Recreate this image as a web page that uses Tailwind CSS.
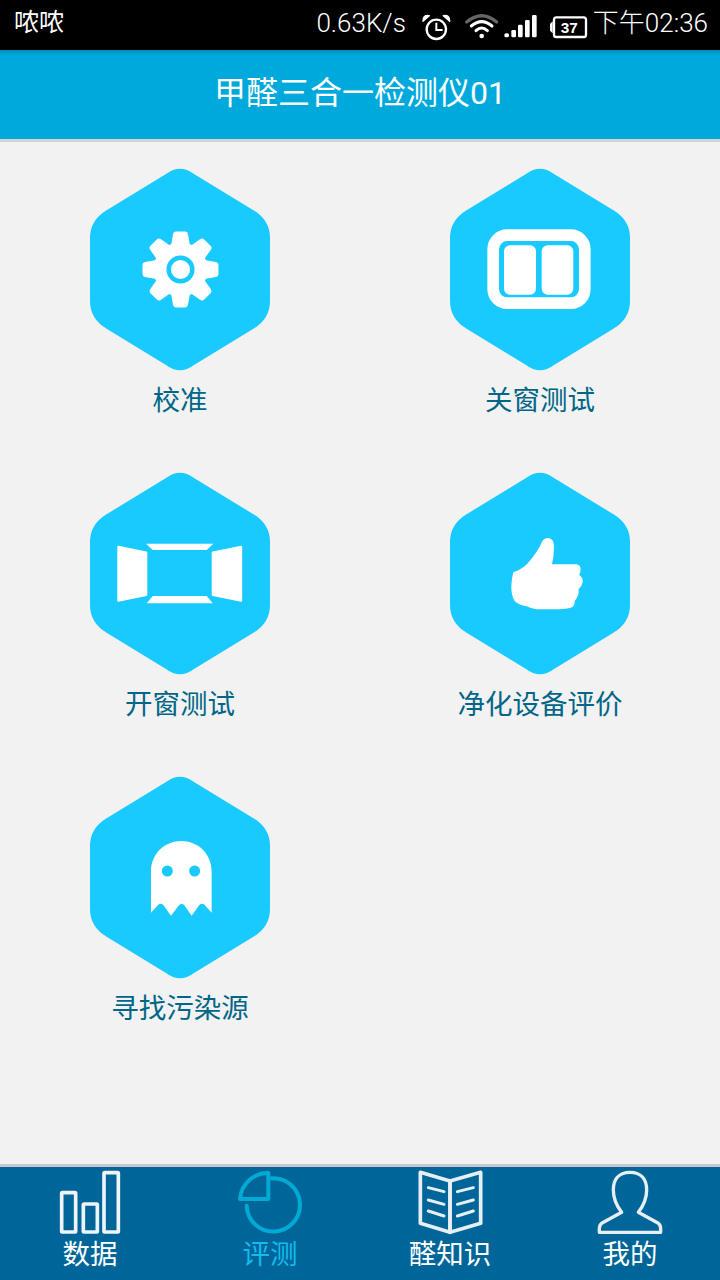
<!DOCTYPE html>
<html lang="zh">
<head>
<meta charset="utf-8">
<script src="https://cdn.jsdelivr.net/npm/@tailwindcss/browser@4"></script>
</head>
<body class="m-0">
<div class="w-[720px] h-[1280px] flex flex-col overflow-hidden bg-[#f2f2f2] font-['Roboto','Noto_Sans_CJK_SC',sans-serif] font-light">
  <div class="h-[50px] shrink-0 bg-black text-white text-[26px] flex items-center justify-between pl-[14px] pr-[12px]">
    <span class="-mt-[5px] text-[25px] font-normal">哝哝</span>
    <div class="flex items-center">
      <span class="-mt-[3px] mr-[4px]">0.63K/s</span>
      <svg class="w-[178px] h-[50px]" viewBox="0 0 534 150" fill="none">
        <circle cx="79" cy="88" r="29" stroke="#fff" stroke-width="7"/>
        <path d="M79 68V90H98" stroke="#fff" stroke-width="6"/>
        <path d="M39 64Q38 44 58 47ZM119 64Q120 44 100 47Z" fill="#fff" stroke="#fff" stroke-width="4" stroke-linejoin="round"/>
        <path d="M170 66Q215 28 260 66" stroke="#666" stroke-width="10" stroke-linecap="round"/>
        <path d="M184 78Q215 52 246 78" stroke="#fff" stroke-width="9" stroke-linecap="round"/>
        <path d="M198 92Q215 76 232 92" stroke="#fff" stroke-width="9" stroke-linecap="round"/>
        <circle cx="215" cy="108" r="7" fill="#fff"/>
        <rect x="283" y="100" width="14" height="12" rx="5" fill="#fff"/>
        <rect x="304" y="90" width="14" height="22" rx="4" fill="#fff"/>
        <rect x="324" y="74" width="14" height="38" rx="4" fill="#fff"/>
        <rect x="345" y="60" width="14" height="52" rx="4" fill="#fff"/>
        <rect x="366" y="45" width="14" height="67" rx="4" fill="#fff"/>
        <rect x="432" y="52" width="96" height="59" rx="7" stroke="#fff" stroke-width="7"/>
        <path d="M428 64L420 72V92L428 100Z" fill="#fff"/>
        <text x="478" y="98" text-anchor="middle" fill="#fff" font-family="Liberation Sans" font-weight="700" font-size="46">37</text>
      </svg>
      <span class="-mt-[3px] ml-[5px]">下午02:36</span>
    </div>
  </div>

  <div class="h-[89px] shrink-0 bg-[#00a9dc] shadow-[inset_0_5px_4px_-3px_rgba(0,0,0,0.2)] flex items-center justify-center text-white text-[32px] font-normal pb-[3px]">甲醛三合一检测仪01</div>
  <div class="h-[3px] shrink-0 bg-[#d2d2d2]"></div>

  <main class="flex-1 grid grid-cols-2 content-start pt-[26px] text-[#006688] text-[27.5px] font-normal">
    <div class="h-[304px] flex flex-col items-center">
      <svg class="w-[180px] h-[203px]" viewBox="0 0 180 203">
        <path d="M76 6Q90 -4.500 104 6L163 42Q180 52 180 70V133Q180 151 163 161L104 197Q90 207.500 76 197L17 161Q0 151 0 133V70Q0 52 17 42Z" fill="#18caff"/>
        <circle cx="90.500" cy="101.500" r="27" fill="#fff"/>
        <g fill="#fff" stroke="#fff" stroke-width="6" stroke-linejoin="round">
          <path d="M84 78L86 66.500H95L97 78Z"/>
          <path d="M84 78L86 66.500H95L97 78Z" transform="rotate(45 90.500 101.500)"/>
          <path d="M84 78L86 66.500H95L97 78Z" transform="rotate(90 90.500 101.500)"/>
          <path d="M84 78L86 66.500H95L97 78Z" transform="rotate(135 90.500 101.500)"/>
          <path d="M84 78L86 66.500H95L97 78Z" transform="rotate(180 90.500 101.500)"/>
          <path d="M84 78L86 66.500H95L97 78Z" transform="rotate(225 90.500 101.500)"/>
          <path d="M84 78L86 66.500H95L97 78Z" transform="rotate(270 90.500 101.500)"/>
          <path d="M84 78L86 66.500H95L97 78Z" transform="rotate(315 90.500 101.500)"/>
        </g>
        <circle cx="90.500" cy="101.500" r="11.800" fill="#fff" stroke="#18caff" stroke-width="4.500"/>
      </svg>
      <span class="mt-[12px] leading-[36px]">校准</span>
    </div>
    <div class="h-[304px] flex flex-col items-center">
      <svg class="w-[180px] h-[203px]" viewBox="0 0 180 203">
        <path d="M76 6Q90 -4.500 104 6L163 42Q180 52 180 70V133Q180 151 163 161L104 197Q90 207.500 76 197L17 161Q0 151 0 133V70Q0 52 17 42Z" fill="#18caff"/>
        <rect x="43.200" y="67.200" width="91.600" height="68" rx="14" fill="none" stroke="#fff" stroke-width="11.700"/>
        <rect x="54" y="77.300" width="32" height="49.400" rx="6" fill="#fff"/>
        <rect x="91.700" y="77.300" width="31.600" height="49.400" rx="6" fill="#fff"/>
      </svg>
      <span class="mt-[12px] leading-[36px]">关窗测试</span>
    </div>
    <div class="h-[304px] flex flex-col items-center">
      <svg class="w-[180px] h-[203px]" viewBox="0 0 180 203">
        <path d="M76 6Q90 -4.500 104 6L163 42Q180 52 180 70V133Q180 151 163 161L104 197Q90 207.500 76 197L17 161Q0 151 0 133V70Q0 52 17 42Z" fill="#18caff"/>
        <g fill="#fff" stroke="#fff" stroke-width="2" stroke-linejoin="round">
          <path d="M28.300 74.700L56.300 80.500V122.900L28.300 128.700Z"/>
          <path d="M151.200 74.700L122.700 80.500V122.900L151.200 128.700Z"/>
        </g>
        <g fill="#fff">
          <path d="M56 71.700H123.300L116.700 78H62.700Z"/>
          <path d="M62.700 124H116.700L122.700 131.300H56.700Z"/>
        </g>
      </svg>
      <span class="mt-[12px] leading-[36px]">开窗测试</span>
    </div>
    <div class="h-[304px] flex flex-col items-center">
      <svg class="w-[180px] h-[203px]" viewBox="0 0 180 203">
        <path d="M76 6Q90 -4.500 104 6L163 42Q180 52 180 70V133Q180 151 163 161L104 197Q90 207.500 76 197L17 161Q0 151 0 133V70Q0 52 17 42Z" fill="#18caff"/>
        <path transform="translate(-20 -7) scale(0.3333)" fill="#fff" d="M250 322Q282 312 304 282Q326 254 336 230Q344 217 356 219Q372 222 372 244Q372 275 366 298H435Q452 298 452 312Q452 322 448 330Q460 338 458 352Q456 364 446 372Q448 385 442 396Q438 404 434 408Q436 424 420 429Q405 433 370 433H320Q305 432 290 424Q265 420 254 408Q243 390 244 362Q245 338 250 322Z"/>
      </svg>
      <span class="mt-[12px] leading-[36px]">净化设备评价</span>
    </div>
    <div class="h-[304px] flex flex-col items-center">
      <svg class="w-[180px] h-[203px]" viewBox="0 0 180 203">
        <path d="M76 6Q90 -4.500 104 6L163 42Q180 52 180 70V133Q180 151 163 161L104 197Q90 207.500 76 197L17 161Q0 151 0 133V70Q0 52 17 42Z" fill="#18caff"/>
        <g transform="translate(-20 -6) scale(0.3333)">
          <path fill="#fff" d="M243 428V305C243 250 285 213 334 213C383 213 425 250 425 305V428L402 403Q395 398 388 405L365 437L343 406Q335 397 327 406L303 437L280 405Q272 398 265 404Z"/>
          <circle cx="292" cy="303" r="16.500" fill="#18caff"/>
          <circle cx="374" cy="303" r="16.500" fill="#18caff"/>
        </g>
      </svg>
      <span class="mt-[12px] leading-[36px]">寻找污染源</span>
    </div>
  </main>

  <div class="h-[3px] shrink-0 bg-[#c9c9c9]"></div>
  <nav class="h-[113px] shrink-0 bg-[#006699] grid grid-cols-4 text-white text-[27.5px] font-normal">
    <div class="flex flex-col items-center">
      <svg class="w-[180px] h-[70px]" viewBox="0 36 540 210" fill="none" stroke="#eef4f8" stroke-width="11">
        <rect x="185" y="113" width="42" height="118" rx="2"/>
        <rect x="250" y="147" width="42" height="84" rx="2"/>
        <rect x="312" y="53" width="43" height="178" rx="2"/>
      </svg>
      <span class="mt-[3px] leading-[30px]">数据</span>
    </div>
    <div class="flex flex-col items-center text-[#10bbee]">
      <svg class="w-[180px] h-[70px]" viewBox="540 36 540 210" fill="none" stroke="#00aad4" stroke-width="12" stroke-linejoin="round" stroke-linecap="round">
        <path d="M815 70A80 80 0 1 1 740 152"/>
        <path d="M805 54V132H720A84 84 0 0 1 805 54Z"/>
      </svg>
      <span class="mt-[3px] leading-[30px]">评测</span>
    </div>
    <div class="flex flex-col items-center">
      <svg class="w-[180px] h-[70px]" viewBox="0 36 540 210" fill="none" stroke="#e6eff5" stroke-width="11" stroke-linejoin="round" stroke-linecap="round">
        <path d="M181 52L270 78V232L181 205Z"/>
        <path d="M362 52L270 78V232L362 205Z"/>
        <path stroke-width="9" d="M205 98L252 110M205 135L252 148M205 168L252 183M292 110L340 98M292 148L340 135M292 183L340 168"/>
      </svg>
      <span class="mt-[3px] leading-[30px]">醛知识</span>
    </div>
    <div class="flex flex-col items-center">
      <svg class="w-[180px] h-[70px]" viewBox="540 36 540 210" fill="none" stroke="#e6eff5" stroke-width="10" stroke-linejoin="round">
        <path d="M810 52C775 52 760 75 760 105C760 130 768 150 785 172L725 205Q718 210 718 222V232H902V222Q902 210 895 205L835 172C852 150 860 130 860 105C860 75 845 52 810 52Z"/>
      </svg>
      <span class="mt-[3px] leading-[30px]">我的</span>
    </div>
  </nav>
</div>
</body>
</html>
